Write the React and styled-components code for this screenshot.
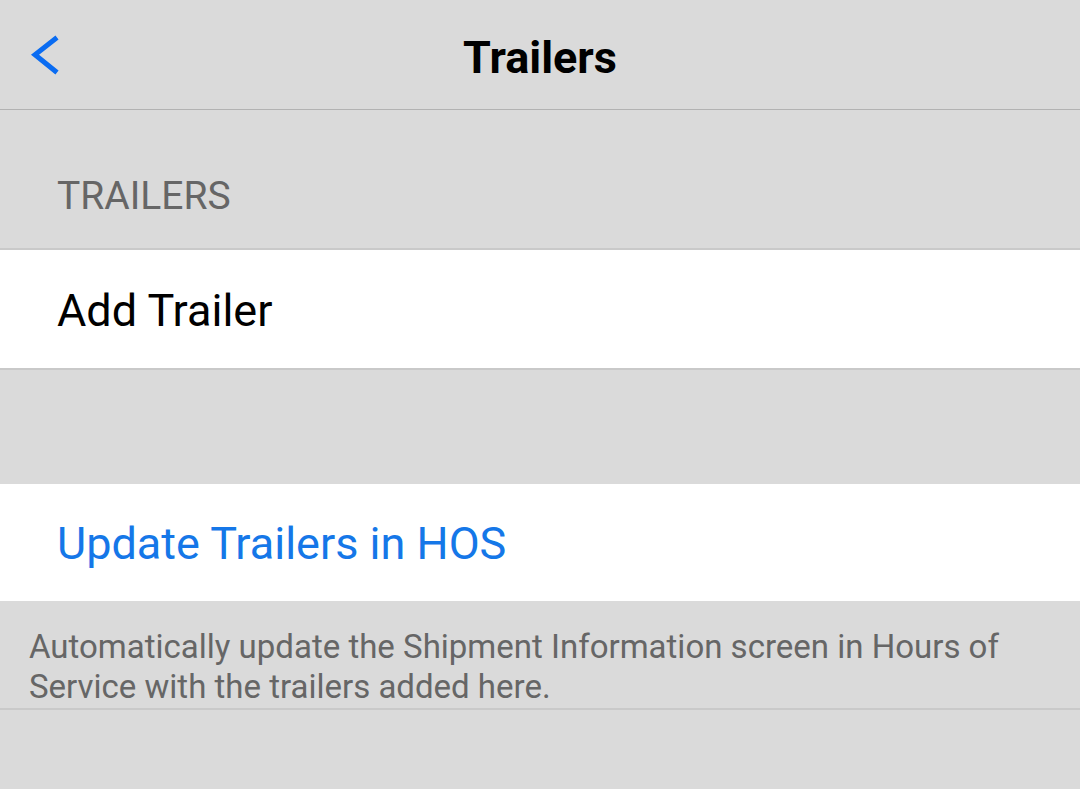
import React from 'react'
import styled, { createGlobalStyle } from 'styled-components';

const GlobalStyle = createGlobalStyle`
    html, body {
        margin: 0;
        padding: 0;
        background: #dadada;
        font-family: Roboto, "Liberation Sans", sans-serif;
    }
`;

const BackIcon = () =>
    <svg width='32' height='46' viewBox='0 0 32 46'>
        <polyline
            points='27,5.5 5,22.8 27,40.5'
            fill='none'
            stroke='#0a6cf2'
            strokeWidth='5'
            strokeLinejoin='miter'
        />
    </svg>

export default () =>
    <Screen>
        <GlobalStyle />
        <NavBar>
            <BackButton aria-label='Back'>
                <BackIcon />
            </BackButton>
            <Title>{'Trailers'}</Title>
            <span />
        </NavBar>
        <SectionHeader>{'TRAILERS'}</SectionHeader>
        <Row bordered>
            <RowLabel>{'Add Trailer'}</RowLabel>
        </Row>
        <Spacer />
        <Row>
            <RowLabel action>{'Update Trailers in HOS'}</RowLabel>
        </Row>
        <Footer>
            Automatically update the Shipment Information screen in Hours of
            Service with the trailers added here.
        </Footer>
    </Screen>

const Screen = styled.div`
    min-height: 789px;
    background: #dadada;
    display: flex;
    flex-direction: column;
`;

const NavBar = styled.header`
    height: 109px;
    border-bottom: 1px solid #b2b2b2;
    display: grid;
    grid-template-columns: 1fr auto 1fr;
    align-items: center;
`;

const BackButton = styled.button`
    justify-self: start;
    margin-left: 30px;
    padding: 0;
    border: 0;
    background: none;
    display: flex;
    cursor: pointer;
`;

const Title = styled.h1`
    margin: 0;
    padding-top: 5px;
    font-size: 45px;
    font-weight: 700;
    color: #000;
`;

const SectionHeader = styled.h2`
    margin: 0;
    height: 140px;
    box-sizing: border-box;
    padding: 0 57px 30px;
    display: flex;
    align-items: flex-end;
    font-size: 39px;
    font-weight: 400;
    line-height: 44px;
    color: #666;
    border-bottom: 2px solid #c9c9c9;
`;

const Row = styled.div`
    box-sizing: border-box;
    background: #fff;
    display: flex;
    align-items: center;
    padding: 3px 57px 0;
    border-bottom: ${p => p.bordered ? '2px solid #c9c9c9' : '0'};
    height: ${p => p.bordered ? '120px' : '117px'};
`;

const RowLabel = styled.span`
    font-size: 45px;
    line-height: 52px;
    color: ${p => p.action ? '#1577e8' : '#000'};
`;

const Spacer = styled.div`
    height: 114px;
`;

const Footer = styled.p`
    margin: 0;
    padding: 26px 29px 1px;
    font-size: 33px;
    line-height: 40px;
    color: #666;
    border-bottom: 2px solid #c9c9c9;
`;
